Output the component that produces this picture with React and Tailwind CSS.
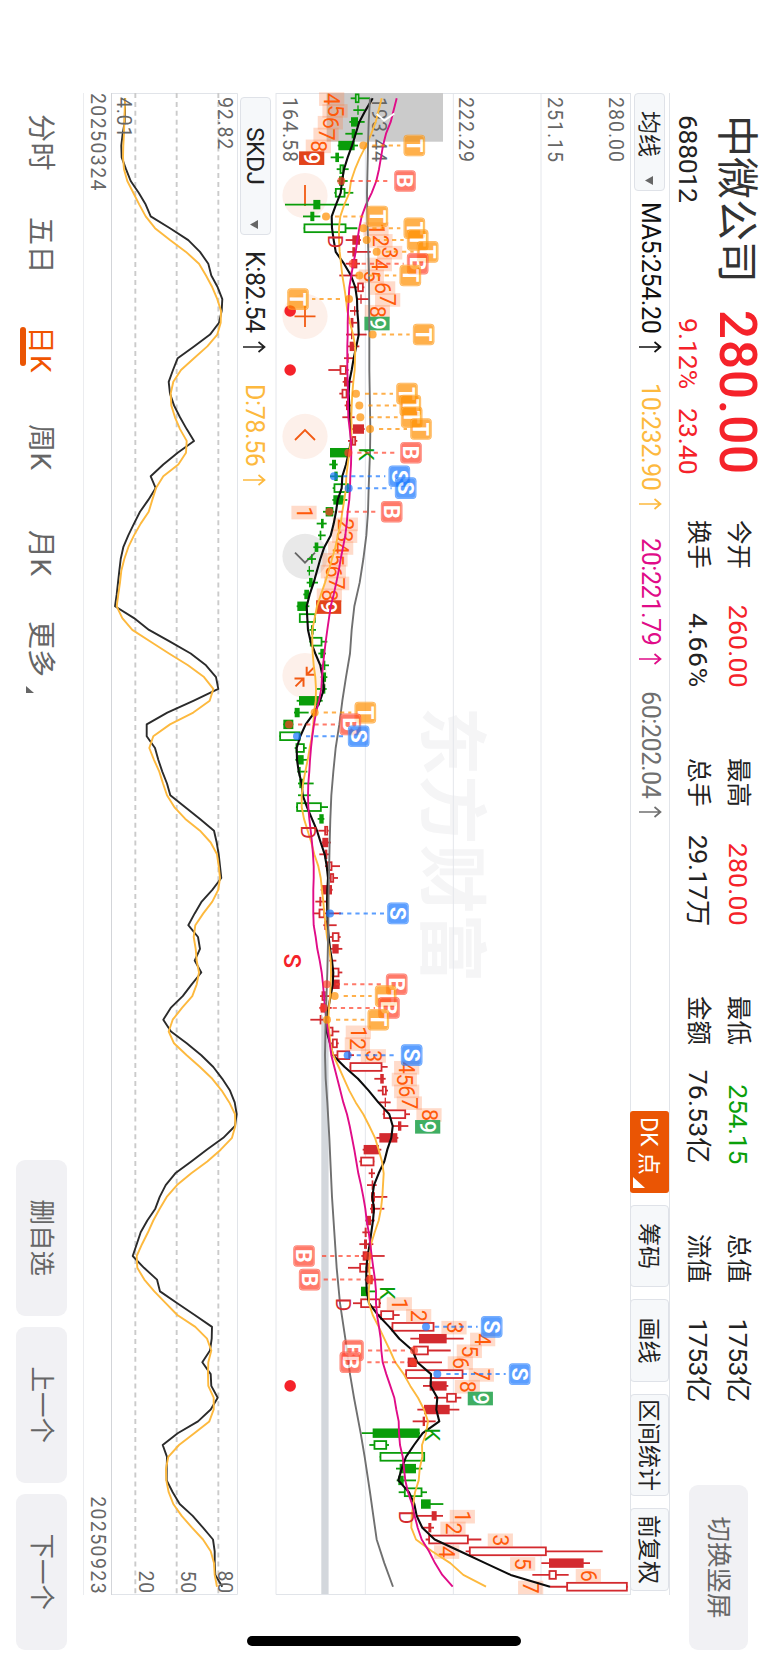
const INK = { r: "#d32a2f", g: "#0a9d0a" };
const TAG_COLORS = { T: "#ff9000", B: "#ff422c", S: "#1676ff" };

// Chart levels are stored in thirds of a pixel above the chart's origin.
const X0 = 98.3;
const STEP = 11.813;
const px = (i) => X0 + STEP * i;
const mainY = (v) => 360 - v / 3;
const subY = (v) => 238 - v / 3;

// [colour, hollow, body low, body high, wick low, wick high]
const CANDLES = [
  ["g", 1, 255, 268, 242, 300], ["g", 0, 262, 266, 250, 284], ["g", 0, 243, 264, 238, 284], ["g", 0, 245, 256, 226, 278],
  ["g", 0, 205, 254, 203, 264], ["g", 0, 196, 207, 182, 221], ["g", 1, 209, 222, 200, 236], ["g", 0, 207, 222, 202, 233],
  ["g", 1, 195, 226, 193, 250], ["g", 0, 130, 151, 45, 237], ["g", 0, 121, 133, 99, 151], ["g", 1, 101, 229, 101, 262],
  ["r", 0, 247, 270, 227, 273], ["r", 0, 247, 256, 232, 302], ["r", 0, 244, 262, 227, 270], ["r", 0, 242, 246, 208, 262],
  ["r", 1, 262, 281, 240, 283], ["r", 0, 271, 275, 258, 297], ["r", 0, 252, 256, 240, 266], ["r", 1, 242, 250, 236, 262],
  ["r", 0, 243, 247, 228, 290], ["r", 0, 239, 253, 232, 268], ["r", 0, 232, 236, 222, 252], ["r", 1, 209, 230, 175, 236],
  ["r", 0, 222, 232, 218, 252], ["r", 1, 215, 232, 208, 236], ["r", 0, 228, 240, 224, 244], ["r", 0, 240, 245, 217, 254],
  ["r", 0, 249, 282, 243, 284], ["r", 1, 245, 258, 234, 262], ["g", 0, 180, 240, 180, 240], ["g", 0, 186, 198, 178, 203],
  ["g", 0, 193, 203, 180, 215], ["g", 1, 191, 236, 188, 238], ["g", 0, 190, 221, 187, 232], ["g", 0, 167, 190, 159, 193],
  ["g", 0, 153, 161, 140, 170], ["g", 0, 149, 154, 144, 167], ["g", 0, 134, 145, 130, 160], ["g", 0, 123, 128, 112, 138],
  ["g", 0, 116, 120, 111, 132], ["g", 0, 117, 128, 110, 144], ["g", 0, 103, 117, 100, 120], ["g", 0, 82, 112, 80, 118],
  ["g", 1, 87, 137, 87, 137], ["g", 0, 123, 131, 118, 138], ["g", 1, 120, 157, 118, 172], ["g", 0, 151, 162, 145, 168],
  ["g", 0, 161, 166, 154, 177], ["g", 0, 155, 168, 152, 172], ["g", 0, 156, 166, 140, 170], ["g", 0, 87, 150, 80, 158],
  ["g", 0, 74, 89, 72, 116], ["g", 0, 40, 70, 40, 70], ["g", 1, 28, 91, 28, 91], ["g", 1, 77, 104, 74, 110],
  ["g", 0, 83, 101, 76, 112], ["g", 0, 86, 92, 82, 112], ["g", 0, 88, 100, 84, 131], ["g", 0, 93, 97, 84, 122],
  ["g", 1, 79, 155, 78, 174], ["g", 0, 148, 161, 143, 163], ["r", 1, 163, 174, 145, 176], ["r", 0, 157, 175, 155, 183],
  ["r", 0, 164, 172, 148, 180], ["r", 1, 170, 187, 165, 210], ["r", 1, 180, 192, 172, 204], ["r", 0, 155, 186, 152, 188],
  ["r", 0, 148, 154, 136, 172], ["r", 1, 146, 165, 130, 213], ["r", 0, 163, 174, 160, 200], ["r", 1, 186, 208, 180, 212],
  ["r", 0, 187, 206, 182, 217], ["r", 0, 180, 184, 178, 199], ["r", 1, 184, 208, 180, 217], ["r", 0, 186, 209, 186, 209],
  ["r", 1, 155, 167, 150, 180], ["r", 0, 152, 170, 148, 185], ["r", 0, 149, 154, 121, 160], ["r", 1, 172, 190, 168, 208],
  ["r", 1, 186, 203, 182, 206], ["r", 1, 200, 240, 186, 252], ["r", 1, 239, 337, 239, 353], ["r", 1, 331, 341, 313, 347],
  ["r", 1, 336, 350, 323, 354], ["r", 0, 344, 348, 325, 362], ["r", 1, 340, 408, 338, 420], ["r", 0, 384, 394, 368, 415],
  ["r", 0, 328, 382, 319, 385], ["r", 0, 281, 327, 278, 334], ["r", 1, 271, 313, 268, 313], ["r", 0, 303, 308, 296, 315],
  ["r", 0, 305, 310, 291, 320], ["r", 0, 303, 315, 303, 352], ["r", 0, 303, 314, 300, 343], ["r", 0, 289, 303, 286, 314],
  ["r", 0, 284, 290, 277, 300], ["r", 0, 282, 291, 268, 310], ["r", 0, 278, 296, 274, 344], ["r", 1, 268, 296, 234, 312],
  ["r", 0, 290, 308, 284, 341], ["g", 0, 273, 292, 273, 316], ["r", 1, 271, 331, 249, 333], ["r", 1, 331, 372, 320, 389],
  ["r", 1, 365, 493, 365, 493], ["r", 0, 447, 530, 421, 581], ["r", 1, 430, 476, 426, 542], ["r", 0, 413, 440, 413, 516],
  ["r", 1, 406, 580, 406, 580], ["r", 0, 479, 530, 459, 535], ["r", 1, 529, 560, 492, 574], ["r", 0, 462, 539, 442, 568],
  ["r", 0, 458, 465, 428, 497], ["g", 0, 308, 449, 275, 450], ["g", 1, 311, 351, 298, 357], ["g", 1, 329, 465, 329, 465],
  ["g", 0, 389, 438, 378, 457], ["g", 0, 385, 401, 380, 438], ["g", 1, 402, 457, 386, 471], ["g", 0, 453, 482, 453, 520],
  ["r", 0, 485, 500, 440, 519], ["r", 0, 475, 484, 456, 492], ["r", 1, 475, 596, 467, 634], ["r", 1, 597, 830, 587, 998],
  ["r", 0, 837, 941, 814, 960], ["r", 1, 836, 860, 787, 896], ["r", 1, 889, 1073, 840, 1073],
];

const MA5 = [
  308, 287, 268, 257, 246, 233, 222, 216, 212, 198, 185, 186, 191, 197, 222, 243, 256, 261, 262, 265, 266, 259, 251, 245, 238,
  236, 238, 239, 242, 243, 236, 228, 217, 215, 203, 198, 191, 182, 163, 151, 141, 131, 119, 110, 112, 114, 122, 136, 151, 158,
  162, 150, 133, 107, 91, 80, 81, 86, 95, 98, 111, 126, 141, 152, 164, 170, 174, 172, 171, 172, 173, 176, 180, 186, 190,
  188, 182, 175, 169, 170, 180, 189, 224, 264, 296, 325, 358, 368, 364, 352, 343, 326, 312, 307, 312, 309, 304, 299, 293, 289,
  289, 290, 297, 324, 358, 388, 428, 442, 483, 482, 502, 499, 508, 458, 432, 408, 395, 385, 417, 433, 440, 457, 494, 570, 646,
  722, 840,
];

const MA10 = [
  335, 326, 317, 304, 288, 270, 255, 243, 238, 223, 211, 207, 207, 209, 213, 217, 223, 228, 232, 240, 249, 256, 255, 254, 250,
  247, 245, 244, 245, 243, 238, 233, 229, 228, 223, 217, 212, 204, 196, 186, 176, 165, 153, 141, 134, 127, 127, 128, 131, 136,
  138, 137, 132, 130, 126, 119, 113, 106, 99, 95, 95, 102, 113, 124, 133, 145, 152, 156, 160, 163, 167, 171, 178, 182, 183,
  182, 180, 177, 175, 178, 181, 190, 206, 222, 238, 257, 280, 298, 315, 326, 336, 341, 339, 337, 333, 326, 314, 303, 300, 298,
  299, 296, 297, 308, 326, 343, 360, 376, 401, 421, 444, 462, 474, 468, 456, 457, 449, 446, 435, 430, 425, 424, 438, 486, 541,
  580, 648,
];

const MA20 = [
  380, 371, 362, 348, 339, 333, 327, 319, 305, 288, 275, 268, 262, 257, 250, 244, 238, 236, 234, 233, 233, 232, 232, 232, 233,
  234, 234, 235, 239, 243, 244, 243, 241, 240, 238, 233, 230, 226, 219, 212, 206, 199, 191, 182, 177, 172, 167, 163, 159, 156,
  154, 147, 138, 132, 127, 123, 120, 118, 115, 114, 115, 118, 122, 126, 129, 131, 131, 130, 130, 130, 131, 137, 142, 149, 155,
  159, 162, 165, 169, 174, 179, 184, 193, 202, 211, 220, 231, 239, 246, 253, 259, 265, 273, 280, 286, 290, 296, 301, 305, 310,
  315, 318, 318, 321, 327, 332, 334, 338, 349, 361, 373, 379, 386, 387, 390, 398, 402, 406, 414, 426, 434, 443, 455, 477, 495,
  517, 548,
];

// The slow average hardly bends, so only its turning points are kept: [index, level]
const MA60 = [
  [0, 300], [2, 296], [4, 294], [8, 291], [10, 292], [12, 294], [15, 297], [20, 298], [23, 298], [28, 301], [30, 300],
  [33, 296], [35, 294], [37, 289], [39, 280], [41, 269], [43, 253], [45, 245], [47, 240], [49, 228], [51, 217], [53, 208],
  [55, 197], [57, 190], [59, 184], [61, 181], [63, 179], [67, 176], [70, 175], [74, 172], [78, 167], [81, 165], [83, 167],
  [85, 172], [88, 178], [93, 186], [96, 193], [99, 200], [102, 210], [105, 226], [108, 240], [110, 252], [113, 272],
  [115, 284], [118, 300], [120, 310], [122, 320], [124, 343], [126, 369],
];

const K_LINE = [
  375, 375, 374, 368, 364, 365, 378, 392, 416, 437, 452, 510, 565, 600, 625, 634, 653, 667, 665, 657, 630, 582, 533, 519, 506,
  510, 522, 540, 560, 582, 533, 490, 452, 467, 445, 420, 402, 385, 370, 362, 358, 354, 350, 345, 402, 447, 510, 572, 618, 648,
  655, 580, 502, 440, 440, 465, 475, 487, 501, 511, 555, 600, 642, 650, 656, 660, 664, 637, 605, 584, 565, 594, 600, 584, 604,
  575, 548, 512, 490, 513, 560, 604, 640, 667, 690, 704, 710, 705, 670, 620, 574, 526, 497, 479, 466, 442, 422, 410, 398, 432,
  471, 480, 532, 584, 636, 635, 630, 607, 632, 634, 653, 632, 594, 533, 488, 501, 500, 500, 518, 539, 578, 609, 639, 644, 644,
  646, 667,
];

const D_LINE = [
  376, 374, 373, 372, 370, 369, 372, 382, 400, 418, 437, 465, 510, 558, 597, 618, 637, 652, 663, 662, 652, 622, 582, 543, 520,
  512, 514, 525, 540, 560, 558, 535, 490, 468, 457, 446, 422, 402, 385, 373, 364, 360, 355, 350, 367, 397, 452, 507, 564, 612,
  640, 629, 580, 510, 460, 448, 462, 478, 489, 501, 523, 556, 600, 632, 651, 656, 660, 655, 637, 610, 586, 581, 587, 590, 597,
  590, 577, 546, 518, 506, 522, 560, 600, 637, 665, 688, 705, 706, 696, 662, 622, 574, 531, 500, 479, 460, 444, 426, 410, 412,
  433, 463, 497, 532, 586, 621, 634, 625, 624, 625, 641, 641, 628, 583, 537, 505, 498, 499, 506, 520, 545, 576, 609, 632, 642,
  644, 651,
];

// [kind, index, dot level, tag centre level]
const TAGS = [
  ["T", 4, 280, 433], ["B", 7, 214, 405], ["T", 10, 168, 322], ["T", 11, 280, 433], ["T", 12, 290, 443], ["T", 13, 320, 473],
  ["B", 14, 248, 443], ["T", 15, 268, 421], ["T", 17, 237, 84], ["T", 20, 308, 461], ["T", 25, 258, 411], ["T", 26, 268, 421],
  ["T", 27, 271, 425], ["T", 28, 300, 453], ["B", 30, 235, 423], ["S", 32, 192, 388], ["S", 33, 236, 407], ["B", 35, 178, 365],
  ["T", 52, 134, 286], ["B", 53, 57, 241], ["S", 54, 81, 266], ["S", 69, 180, 384], ["B", 75, 170, 380], ["T", 76, 194, 347],
  ["B", 77, 161, 357], ["T", 78, 171, 325], ["S", 81, 233, 425], ["B", 98, 294, 102], ["B", 100, 299, 119],
  ["S", 104, 468, 665], ["B", 106, 432, 249], ["B", 107, 430, 241], ["S", 108, 502, 749],
];

// Sequential counts: first candle, first number, levels, colour of the closing 9
const COUNTS = [
  { from: 0, first: 4, at: [185, 195, 181, 168, 145, 125], end: "#e2431b" },
  { from: 11, first: 1, at: [318, 330, 359, 328, 304, 338, 353, 322, 321], end: "#3fae63" },
  { from: 35, first: 1, at: [102, 226, 224, 212, 195, 190, 200, 178, 176], end: "#e2431b" },
  { from: 79, first: 1, at: [265, 262, 310, 410, 403, 410, 418, 477, 473], end: "#3fae63" },
  { from: 102, first: 1, at: [388, 446, 552, 638, 598, 571, 634, 592, 631], end: "#3fae63" },
  { from: 120, first: 1, at: [577, 549, 691, 530, 758, 955, 782], end: "" },
];

const DK = [
  ["D", 12, 197], ["K", 30, 289], ["D", 62, 115], ["K", 101, 352], ["D", 102, 221], ["K", 113, 488], ["D", 120, 410],
];

const points = (values, y) => values.map((v, i) => `${px(i).toFixed(1)},${y(v).toFixed(1)}`).join(" ");

function Candle({ i, data }) {
  const [tone, hollow, lo, hi, wickLo, wickHi] = data;
  const c = INK[tone];
  const x = px(i);
  const top = mainY(hi);
  const h = (hi - lo) / 3;
  return (
    <g stroke={c} strokeWidth="1.8">
      <line x1={x} x2={x} y1={mainY(wickHi)} y2={mainY(wickLo)} />
      {hollow ? (
        <rect x={x - 3.9} y={top + 0.8} width="7.8" height={Math.max(h - 1.6, 1)} fill="#fff" />
      ) : (
        <rect x={x - 4.7} y={top} width="9.4" height={h} fill={c} stroke="none" />
      )}
    </g>
  );
}

function Tag({ kind, i, dot, at }) {
  const c = TAG_COLORS[kind];
  const x = px(i);
  const y = mainY(at);
  const y0 = mainY(dot);
  const dir = y < y0 ? -1 : 1;
  return (
    <g opacity="0.7">
      <line x1={x} x2={x} y1={y0 + dir * 9} y2={y - dir * 14} stroke={c} strokeWidth="2" strokeDasharray="4.2 4" />
      <circle cx={x} cy={y0} r="4" fill={c} />
      <rect x={x - 10.8} y={y - 10.8} width="21.6" height="21.6" rx="4" fill={c} />
      <rect x={x - 10} y={y - 10} width="20" height="20" rx="3.4" fill="none" stroke="#fff" strokeOpacity="0.25" />
      <text x={x} y={y + 7.6} textAnchor="middle" fontSize="21.5" fontWeight="700" fill="#fff">
        {kind}
      </text>
    </g>
  );
}

function RoundButtons() {
  const y = mainY(105);
  return (
    <g fill="none" stroke="#f25a13" strokeWidth="1.8">
      {[195.7, 316.3, 436.3, 556.3, 675.7].map((x, i) => (
        <circle key={x} cx={x} cy={y} r="22.6" stroke="none" fill={i === 3 ? "#e9e9e9" : "#fdf0ea"} />
      ))}
      <path d={`M185 ${y}h21M306 ${y}h21M316.4 ${y - 10.5}v21`} />
      <path d={`M440 ${y - 10}l-10 10l10 10`} />
      <path d={`M552.7 ${y - 10}l10 10l-10 10`} stroke="#666" />
      <path d={`M666.8 ${y - 1.7}h7.9v-8.4M674.7 ${y - 1.7}l-7.6-7.6M686.7 ${y + 1.5}h-8.3v9M678.4 ${y + 1.5}l8 8`} strokeWidth="2" />
    </g>
  );
}

function MainChart() {
  return (
    <svg width="1663" height="360" viewBox="0 0 1663 360" className="block" fontFamily="Roboto, sans-serif">
      <text x="844.5" y="203" textAnchor="middle" fontSize="69" fontWeight="700" fill="#f5f5f6" fontFamily="'Noto Sans CJK SC', sans-serif">
        东方财富
      </text>
      {[18, 286, 550, 813].map((v) => (
        <line key={v} x1="93" x2="1594.5" y1={mainY(v)} y2={mainY(v)} stroke="#e4e6eb" />
      ))}
      <path d="M93.5 0V354M1594.5 0V354" stroke="#e1e4e9" />
      <rect x="93" y={mainY(519)} width="48.7" height={(519 - 170) / 3} fill="#cbcbcb" />
      <path d="M1013 308.7L1030 301.4H1594V308.7Z" fill="#d3d7dc" />

      <RoundButtons />
      {[18, 23, 109].map((i) => (
        <circle key={i} cx={px(i)} cy={mainY(60.5)} r="5.8" fill="#f5222a" />
      ))}
      <text x={px(73)} y={mainY(43)} textAnchor="middle" fontSize="24" fontWeight="500" fill="#f5222a">
        S
      </text>

      <g fill="#666" fontSize="19.5" letterSpacing="1">
        <text x="97" y={mainY(1018)}>280.00</text>
        <text x="97" y={mainY(835)}>251.15</text>
        <text x="97" y={mainY(568)}>222.29</text>
        <text x="97" y={mainY(305)}>193.44</text>
        <text x="97" y={mainY(40)}>164.58</text>
      </g>

      {CANDLES.map((d, i) => (
        <Candle key={i} i={i} data={d} />
      ))}

      {COUNTS.map(({ from, first, at, end }) =>
        at.map((v, k) => {
          const n = first + k;
          const x = px(from + k) + 0.8;
          const y = mainY(v);
          return (
            <g key={`${from}-${n}`}>
              <rect x={x - 6.8} y={y - 12.6} width="13.6" height="25.2" fill={n === 9 ? end : "#ff7a3c"} fillOpacity={n === 9 ? 1 : 0.27} />
              <text x={x} y={y + 7.5} textAnchor="middle" fontSize="21.5" fontWeight={n === 9 ? 500 : 400} fill={n === 9 ? "#fff" : "#ff5a0a"}>
                {n}
              </text>
            </g>
          );
        })
      )}

      <g fill="none" strokeWidth="1.9" strokeLinejoin="round">
        <polyline points={points(MA5, mainY)} stroke="#0c0c0c" strokeWidth="2.1" />
        <polyline points={points(MA10, mainY)} stroke="#fdb93e" />
        <polyline points={points(MA20, mainY)} stroke="#e00c88" />
        <polyline points={MA60.map(([i, v]) => `${px(i)},${mainY(v)}`).join(" ")} stroke="#707070" />
        <path d={`M114 ${mainY(320)}L120.5 ${mainY(343)}L113.5 ${mainY(373)}`} stroke="#fff" />
      </g>

      {DK.map(([t, i, v]) => (
        <text key={t + i} x={px(i) + 1.5} y={mainY(v) + 7.4} textAnchor="middle" fontSize="21" fill={t === "K" ? INK.g : INK.r}>
          {t}
        </text>
      ))}
      {TAGS.map(([kind, i, dot, at]) => (
        <Tag key={kind + i} kind={kind} i={i} dot={dot} at={at} />
      ))}
    </svg>
  );
}

function SubChart() {
  return (
    <svg width="1663" height="127" viewBox="0 0 1663 127" className="block" fontFamily="Roboto, sans-serif">
      <path d="M93.5 0.5H1594.5V126.5H93.5Z" fill="none" stroke="#e1e4e9" />
      <path d="M93 126.5H1595" stroke="#d3d5d9" />
      {[406, 530, 655].map((v) => (
        <line key={v} x1="93" x2="1594" y1={subY(v)} y2={subY(v)} stroke="#cbcbcb" strokeWidth="1.9" strokeDasharray="5 3.9" />
      ))}
      <g fill="none" strokeWidth="1.9" strokeLinejoin="round">
        <polyline points={points(K_LINE, subY)} stroke="#2b2b2b" />
        <polyline points={points(D_LINE, subY)} stroke="#fdb93e" />
      </g>
      <g fill="#666" fontSize="19.5" letterSpacing="0.8">
        <text x="97" y={subY(653)}>92.82</text>
        <text x="97" y={subY(350)}>4.01</text>
        <g textAnchor="end">
          <text x="1594" y={subY(654)}>80</text>
          <text x="1594" y={subY(543)}>50</text>
          <text x="1594" y={subY(418)}>20</text>
        </g>
      </g>
    </svg>
  );
}

function Up() {
  return (
    <svg width="12" height="24" viewBox="0 0 12 24" fill="none" stroke="currentColor" strokeWidth="1.7">
      <path d="M6 23V2M1 7.5L6 1.5L11 7.5" />
    </svg>
  );
}

function Caret() {
  return (
    <svg width="9" height="8" viewBox="0 0 9 8" fill="#666">
      <path d="M0 0H9L4.5 8Z" />
    </svg>
  );
}

function Reading({ text, className }) {
  return (
    <div className={"flex shrink-0 items-center gap-2 text-[25px] tracking-[-0.4px] " + className}>
      <span>{text}</span>
      <Up />
    </div>
  );
}

const QUOTES = [
  [["今开", "260.00", "tracking-[0.3px] text-[#f5222a]"], ["换手", "4.66%", "tracking-[0.8px]"]],
  [["最高", "280.00", "tracking-[0.3px] text-[#f5222a]"], ["总手", "29.17万", "tracking-[-0.3px]"]],
  [["最低", "254.15", "tracking-[-0.3px] text-[#0aa00a]"], ["金额", "76.53亿", "tracking-[0.2px]"]],
  [["总值", "1753亿", "tracking-[-0.5px]"], ["流值", "1753亿", "tracking-[-0.5px]"]],
];

function Header() {
  return (
    <header className="flex h-[98px] shrink-0 text-[#222]">
      <div className="ml-[115px] w-[405px] shrink-0">
        <div className="flex h-[62px] items-center">
          <span className="w-[195px] pt-[2px] text-[42px] leading-none text-[#333]">中微公司</span>
          <span className="pb-[2px] text-[51px] leading-none font-medium tracking-[1px] text-[#f5222a]">280.00</span>
        </div>
        <div className="flex h-[36px] items-center text-[26.5px] leading-none">
          <span className="w-[203px] tracking-[-0.3px]">688012</span>
          <span className="w-[90px] text-[#f5222a]">9.12%</span>
          <span className="text-[#f5222a]">23.40</span>
        </div>
      </div>
      <div className="flex shrink-0 gap-[70px]">
        {QUOTES.map((rows) => (
          <div key={rows[0][0]} className="w-[168px] pt-[10px]">
            {rows.map(([label, value, tone]) => (
              <div key={label} className="flex h-[40px] items-center justify-between leading-none">
                <span className="text-[24.5px]">{label}</span>
                <span className={"text-[26.5px] " + tone}>{value}</span>
              </div>
            ))}
          </div>
        ))}
      </div>
      <button className="mt-5 ml-[83px] h-[59px] w-[165px] rounded-[9px] bg-[#f1f1f4] text-[25.5px] text-[#666]">切换竖屏</button>
    </header>
  );
}

const TOOLS = [
  ["筹码", "w-[82px]"],
  ["画线", "w-[83px]"],
  ["区间统计", "w-[102px]"],
  ["前复权", "w-[83px]"],
];

function Toolbar() {
  return (
    <div className="ml-[93px] flex h-[40px] w-[1502px] shrink-0 items-center border-y border-[#e1e4e9]">
      <button className="mr-[11px] flex h-[31px] w-[98px] shrink-0 items-center justify-between rounded border border-[#dfe2e8] bg-[#f6f8fa] pt-[2px] pr-[5px] pl-[17px] text-[23px] leading-none text-[#222]">
        均线
        <Caret />
      </button>
      <Reading text="MA5:254.20" className="w-[181px] text-[#111]" />
      <Reading text="10:232.90" className="w-[155px] text-[#fdb93e]" />
      <Reading text="20:221.79" className="w-[153px] text-[#e00c88]" />
      <Reading text="60:202.04" className="text-[#707070]" />
      <div className="ml-auto flex gap-3 pr-1 text-[23px] leading-none text-[#222]">
        <button className="relative h-[39px] w-[82px] rounded-[3px] bg-[#ea5504] pt-[2px] pr-[12px] whitespace-nowrap text-white">
          DK 点
          <svg width="11" height="12" viewBox="0 0 11 12" className="absolute right-[5px] bottom-[3px]" fill="#fff">
            <path d="M11 0V12H0Z" />
          </svg>
        </button>
        {TOOLS.map(([name, width]) => (
          <button key={name} className={"h-[39px] rounded border border-[#dfe2e8] bg-[#f6f8fa] pt-[2px] whitespace-nowrap " + width}>
            {name}
          </button>
        ))}
      </div>
    </div>
  );
}

const PERIODS = [
  ["分时", "w-[103px]"],
  ["五日", "w-[109px]"],
  ["日K", "w-[98px]"],
  ["周K", "w-[106px]"],
  ["月K", "w-[91px]"],
];

function Footer() {
  return (
    <footer className="flex flex-1 pl-[114px]">
      <nav className="flex h-[83px] items-center pt-[3px] text-[28px] leading-none text-[#666]">
        {PERIODS.map(([name, width]) => (
          <div key={name} className={width}>
            {name === "日K" ? (
              <span className="relative tracking-[1px] text-[#f05400]">
                {name}
                <span className="absolute -bottom-[4px] left-px h-[6px] w-[39px] rounded-full bg-[#ea5504]" />
              </span>
            ) : (
              <span className="tracking-[0.5px]">{name}</span>
            )}
          </div>
        ))}
        <div className="flex items-end gap-[9px]">
          更多
          <svg width="7" height="8" viewBox="0 0 7 8" fill="#666">
            <path d="M7 0V8H0Z" />
          </svg>
        </div>
      </nav>
      <div className="mt-4 mr-[13.5px] ml-auto flex gap-[11.5px] text-[25.5px] text-[#666]">
        {["删自选", "上一个", "下一个"].map((name) => (
          <button key={name} className="h-[51px] w-[155.5px] rounded-[9px] bg-[#f1f1f4]">
            {name}
          </button>
        ))}
      </div>
    </footer>
  );
}

export default function App() {
  return (
    <div className="h-[1663px] w-[768px] overflow-hidden bg-white">
      <div className="relative flex h-[768px] w-[1663px] origin-top-left translate-x-[768px] rotate-90 flex-col bg-white font-[Roboto,'Noto_Sans_CJK_SC',sans-serif]">
        <Header />
        <Toolbar />
        <MainChart />
        <div className="flex h-8 shrink-0 items-center pl-[97px]">
          <button className="mr-[16px] mb-[3px] flex h-[31px] w-[138px] items-center justify-between rounded border border-[#dfe2e8] bg-[#f6f8fa] pt-[2px] pr-[5px] pl-[29px] text-[24.5px] leading-none tracking-[-0.5px] text-[#222]">
            SKDJ
            <Caret />
          </button>
          <Reading text="K:82.54" className="w-[133px] text-[#222]" />
          <Reading text="D:78.56" className="text-[#fdb93e]" />
        </div>
        <SubChart />
        <div className="ml-[93px] flex h-7 w-[1502px] shrink-0 items-center justify-between border-b border-[#ebecef] text-[19.5px] tracking-[1.4px] text-[#666]">
          <span>20250324</span>
          <span>20250923</span>
        </div>
        <Footer />
        <div className="absolute top-[247px] right-[17px] h-[274px] w-[10px] rounded-full bg-black" />
      </div>
    </div>
  );
}
